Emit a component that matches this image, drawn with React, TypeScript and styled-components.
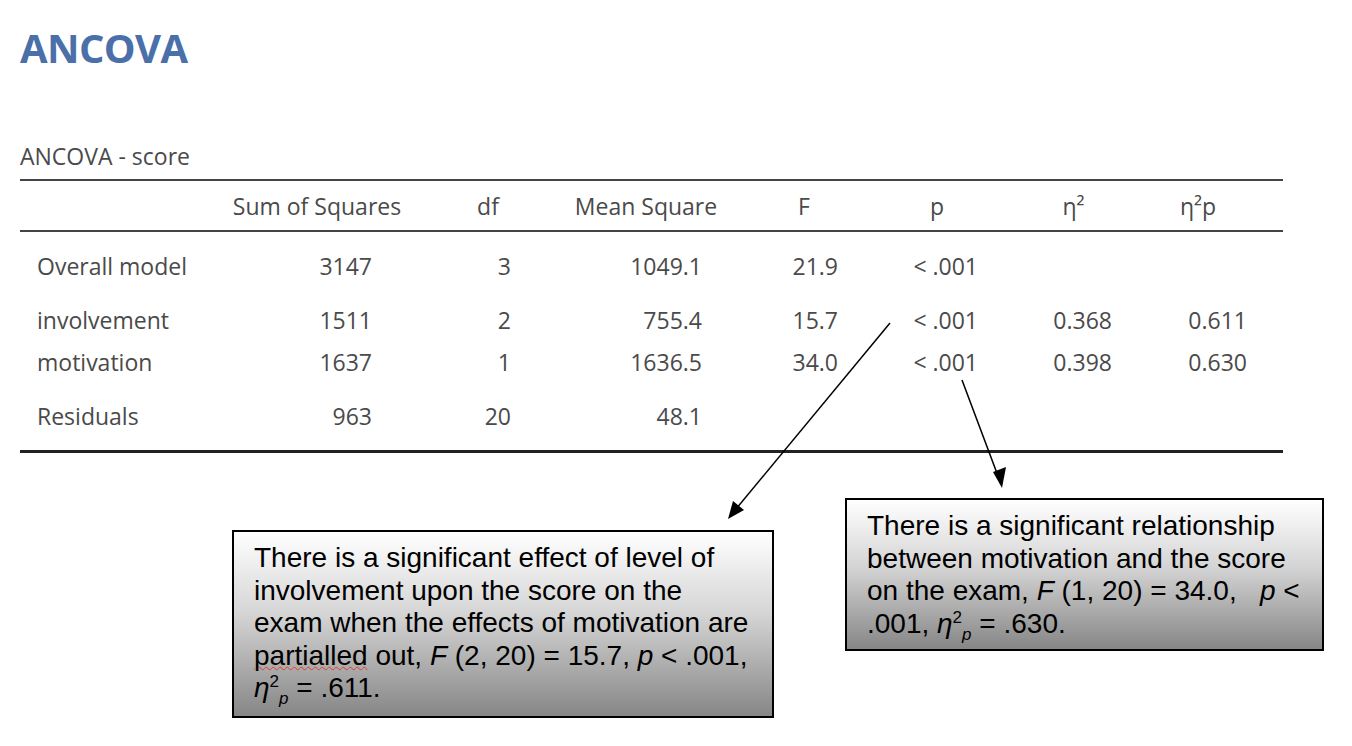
import React from 'react';
import styled, { createGlobalStyle } from 'styled-components';

const GlobalStyle = createGlobalStyle`
  html, body {
    margin: 0;
    padding: 0;
    background: #ffffff;
  }
`;

const tableFont = `'Open Sans', 'Noto Sans', sans-serif`;
const boxFont = `'Liberation Sans', Arial, sans-serif`;

const COLUMNS = '195px 210px 126px 190px 126px 140px 133px 143px';

const Page = styled.div`
  position: relative;
  width: 1352px;
  height: 746px;
  overflow: hidden;
  padding: 28px 0 0 20px;
  box-sizing: border-box;
`;

const Heading = styled.h1`
  margin: 0;
  font-family: ${tableFont};
  font-weight: 700;
  font-size: 40px;
  line-height: 40px;
  letter-spacing: -0.6px;
  color: #4a6fa9;
`;

const TableTitle = styled.div`
  margin-top: 73px;
  font-family: ${tableFont};
  font-size: 23px;
  line-height: 30px;
  color: #4a4a4a;
  padding-bottom: 8px;
`;

const Table = styled.div`
  width: 1263px;
  font-family: ${tableFont};
  font-size: 23px;
  color: #4a4a4a;
  border-top: 2px solid #444;
  border-bottom: 3px solid #222;
`;

const HeaderRow = styled.div`
  display: grid;
  grid-template-columns: ${COLUMNS};
  height: 49px;
  align-items: center;
  border-bottom: 2px solid #444;
`;

const Body = styled.div`
  padding: 13px 0 13px;
  display: flex;
  flex-direction: column;
  gap: 12px;
`;

const Group = styled.div`
  display: flex;
  flex-direction: column;
`;

const Row = styled.div`
  display: grid;
  grid-template-columns: ${COLUMNS};
  height: 42px;
  align-items: center;
`;

const HeadCell = styled.div<{ padRight?: number }>`
  text-align: center;
  padding-right: ${(p) => p.padRight ?? 0}px;
  white-space: nowrap;
`;

const LabelCell = styled.div`
  padding-left: 17px;
  white-space: nowrap;
`;

const NumCell = styled.div<{ padRight: number }>`
  text-align: right;
  padding-right: ${(p) => p.padRight}px;
  white-space: nowrap;
`;

const Notes = styled.div`
  display: flex;
  align-items: flex-start;
  margin-top: 45px;
  padding-left: 212px;
  gap: 71px;
`;

const NoteBox = styled.div<{ width: number; height: number; offset: number; padRight: number }>`
  box-sizing: border-box;
  width: ${(p) => p.width}px;
  height: ${(p) => p.height}px;
  margin-top: ${(p) => p.offset}px;
  border: 2.5px solid #000;
  background: linear-gradient(to bottom, #ffffff 0%, #d4d4d4 45%, #868686 100%);
  padding: 10px ${(p) => p.padRight}px 0 20px;
  font-family: ${boxFont};
  font-size: 28px;
  line-height: 32.6px;
  color: #000;
`;

const Squiggle = styled.span`
  text-decoration: underline wavy #e23b2e;
  text-decoration-thickness: 1px;
  text-underline-offset: 1px;
`;

const Sup = styled.sup`
  font-size: 17px;
  line-height: 0;
`;

const Sub = styled.sub`
  font-size: 17px;
  line-height: 0;
  font-style: italic;
`;

const Arrows = styled.svg`
  position: absolute;
  top: 0;
  left: 0;
  pointer-events: none;
`;

const Eta = () => (
  <>
    <i>η</i>
    <Sup>2</Sup>
    <Sub>p</Sub>
  </>
);

const numPads = [53, 40, 39, 29, 29, 28, 36];

type TableRow = { label: string; values: string[] };

const groups: TableRow[][] = [
  [{ label: 'Overall model', values: ['3147', '3', '1049.1', '21.9', '< .001', '', ''] }],
  [
    { label: 'involvement', values: ['1511', '2', '755.4', '15.7', '< .001', '0.368', '0.611'] },
    { label: 'motivation', values: ['1637', '1', '1636.5', '34.0', '< .001', '0.398', '0.630'] },
  ],
  [{ label: 'Residuals', values: ['963', '20', '48.1', '', '', '', ''] }],
];

export default function App() {
  return (
    <>
      <GlobalStyle />
      <Page>
        <Heading>ANCOVA</Heading>
        <TableTitle>ANCOVA - score</TableTitle>
        <Table>
          <HeaderRow>
            <div />
            <HeadCell padRight={6}>Sum of Squares</HeadCell>
            <HeadCell>df</HeadCell>
            <HeadCell>Mean Square</HeadCell>
            <HeadCell>F</HeadCell>
            <HeadCell>p</HeadCell>
            <HeadCell>η²</HeadCell>
            <HeadCell padRight={27}>η²p</HeadCell>
          </HeaderRow>
          <Body>
            {groups.map((group, gi) => (
              <Group key={gi}>
                {group.map((row) => (
                  <Row key={row.label}>
                    <LabelCell>{row.label}</LabelCell>
                    {row.values.map((v, i) => (
                      <NumCell key={i} padRight={numPads[i]}>
                        {v}
                      </NumCell>
                    ))}
                  </Row>
                ))}
              </Group>
            ))}
          </Body>
        </Table>

        <Notes>
          <NoteBox width={542} height={188} offset={32} padRight={17}>
            There is a significant effect of level of involvement upon the score on the exam
            when the effects of motivation are <Squiggle>partialled</Squiggle> out,{' '}
            <i>F</i> (2, 20) = 15.7, <i>p</i> &lt; .001, <Eta /> = .611.
          </NoteBox>
          <NoteBox width={479} height={153} offset={0} padRight={8}>
            There is a significant relationship between motivation and the score on the exam,{' '}
            <i>F</i> (1, 20) = 34.0, &nbsp; <i>p</i> &lt; .001, <Eta /> = .630.
          </NoteBox>
        </Notes>

        <Arrows width={1352} height={746} viewBox="0 0 1352 746">
          <line x1="890" y1="323" x2="731" y2="515" stroke="#000" strokeWidth="1.5" />
          <line x1="962" y1="380" x2="1001" y2="484" stroke="#000" strokeWidth="1.5" />
          <path d="M728 519 L733 501 L744 510 Z" fill="#000" />
          <path d="M1002 488 L993 472 L1006 467 Z" fill="#000" />
        </Arrows>
      </Page>
    </>
  );
}
